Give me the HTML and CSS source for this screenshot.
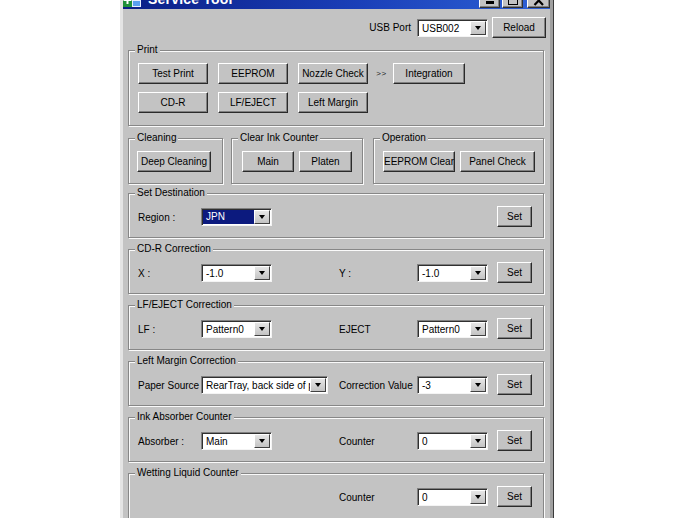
FILE: index.html
```html
<!DOCTYPE html>
<html>
<head>
<meta charset="utf-8">
<link rel="stylesheet" href="styles.css">
</head>
<body>
<div class="window">
  <div class="titlebar">
    <svg class="appicon" width="18" height="16" viewBox="0 0 18 16">
      <rect x="0" y="1" width="9" height="14" fill="#1f8f3a"/>
      <rect x="3.5" y="4" width="2" height="8" fill="#fff"/>
      <rect x="0.5" y="7" width="8" height="2" fill="#fff"/>
      <rect x="9" y="1" width="9" height="14" fill="#e8f0ff"/>
      <rect x="10" y="2" width="7" height="3" fill="#2a6ad8"/>
      <rect x="10" y="9" width="7" height="5" fill="#5aa0f0"/>
    </svg>
    <span class="title">Service Tool</span>
    <span class="spacer"></span>
    <span class="capbtn">
      <svg width="12" height="10" viewBox="0 0 12 10"><rect x="2" y="5" width="8" height="3" fill="#000"/></svg>
    </span>
    <span class="capbtn max">
      <svg width="12" height="10" viewBox="0 0 12 10"><rect x="1.5" y="0.5" width="9" height="8" fill="none" stroke="#000"/><rect x="1" y="0" width="10" height="2" fill="#000"/></svg>
    </span>
    <span class="capbtn close">
      <svg width="12" height="10" viewBox="0 0 12 10"><path d="M1.5 0 L10 9 M10 0 L1.5 9" stroke="#000" stroke-width="2.2" fill="none"/></svg>
    </span>
  </div>

  <div class="client">
    <div class="usbrow">
      <span class="usblabel">USB Port</span>
      <div class="combo"><span class="val">USB002</span><span class="arrow"><i></i></span></div>
      <button class="btn reload">Reload</button>
    </div>

    <div class="group print">
      <span class="legend">Print</span>
      <div class="btnrow">
        <button class="btn w70">Test Print</button>
        <button class="btn w70">EEPROM</button>
        <button class="btn w70">Nozzle Check</button>
        <span class="gt">&gt;&gt;</span>
        <button class="btn w72">Integration</button>
      </div>
      <div class="btnrow">
        <button class="btn w70">CD-R</button>
        <button class="btn w70">LF/EJECT</button>
        <button class="btn w70">Left Margin</button>
      </div>
    </div>

    <div class="grouprow">
      <div class="group small cleaning">
        <span class="legend">Cleaning</span>
        <button class="btn w74">Deep Cleaning</button>
      </div>
      <div class="group small clearink">
        <span class="legend">Clear Ink Counter</span>
        <button class="btn w52">Main</button>
        <button class="btn w53">Platen</button>
      </div>
      <div class="group small operation">
        <span class="legend">Operation</span>
        <button class="btn w72">EEPROM Clear</button>
        <button class="btn w75">Panel Check</button>
      </div>
    </div>

    <div class="group form first">
      <span class="legend">Set Destination</span>
      <div class="formgrid">
        <span class="lbl">Region :</span>
        <div class="combo"><span class="val sel">JPN</span><span class="arrow"><i></i></span></div>
        <button class="btn set c5">Set</button>
      </div>
    </div>

    <div class="group form">
      <span class="legend">CD-R Correction</span>
      <div class="formgrid">
        <span class="lbl">X :</span>
        <div class="combo"><span class="val">-1.0</span><span class="arrow"><i></i></span></div>
        <span class="lbl">Y :</span>
        <div class="combo"><span class="val">-1.0</span><span class="arrow"><i></i></span></div>
        <button class="btn set">Set</button>
      </div>
    </div>

    <div class="group form">
      <span class="legend">LF/EJECT Correction</span>
      <div class="formgrid">
        <span class="lbl">LF :</span>
        <div class="combo"><span class="val">Pattern0</span><span class="arrow"><i></i></span></div>
        <span class="lbl">EJECT</span>
        <div class="combo"><span class="val">Pattern0</span><span class="arrow"><i></i></span></div>
        <button class="btn set">Set</button>
      </div>
    </div>

    <div class="group form">
      <span class="legend">Left Margin Correction</span>
      <div class="formgrid">
        <span class="lbl">Paper Source</span>
        <div class="combo wide"><span class="val">RearTray, back side of paper</span><span class="arrow"><i></i></span></div>
        <span class="lbl">Correction Value</span>
        <div class="combo"><span class="val">-3</span><span class="arrow"><i></i></span></div>
        <button class="btn set">Set</button>
      </div>
    </div>

    <div class="group form">
      <span class="legend">Ink Absorber Counter</span>
      <div class="formgrid">
        <span class="lbl">Absorber :</span>
        <div class="combo"><span class="val">Main</span><span class="arrow"><i></i></span></div>
        <span class="lbl">Counter</span>
        <div class="combo"><span class="val">0</span><span class="arrow"><i></i></span></div>
        <button class="btn set">Set</button>
      </div>
    </div>

    <div class="group form last">
      <span class="legend">Wetting Liquid Counter</span>
      <div class="formgrid">
        <span class="lbl c3">Counter</span>
        <div class="combo"><span class="val">0</span><span class="arrow"><i></i></span></div>
        <button class="btn set">Set</button>
      </div>
    </div>
  </div>
</div>
</body>
</html>
```

FILE: styles.css
```css
html, body {
  margin: 0;
  padding: 0;
  height: 518px;
  overflow: hidden;
  background: #ffffff;
}

body {
  font-family: "Liberation Sans", Arial, sans-serif;
  font-size: 10px;
  color: #000;
}

.window {
  box-sizing: border-box;
  width: 433px;
  margin: -12px 0 0 120px;
  background: #c3c3c3;
  border: 3px solid #c3c3c3;
  border-left-color: #e4e4e4;
  border-top-color: #e4e4e4;
  border-right-color: #a0a0a0;
  box-shadow: 1px 0 0 #3a3a3a;
}

.titlebar {
  display: flex;
  align-items: center;
  height: 18px;
  background: linear-gradient(to right, #0b1f86, #1a3fb8 55%, #2e62d6);
}

.appicon {
  display: block;
  margin-right: 7px;
}

.title {
  color: #fff;
  font-weight: bold;
  font-size: 14px;
  letter-spacing: 0.2px;
  margin-bottom: 3px;
}

.spacer {
  flex: 1;
}

.capbtn {
  box-sizing: border-box;
  width: 21px;
  height: 16px;
  align-self: flex-end;
  margin-bottom: 1px;
  background: #c3c3c3;
  border: 1px solid;
  border-color: #fff #303030 #303030 #fff;
  box-shadow: inset -1px -1px 0 #808080;
  display: flex;
  align-items: flex-end;
  justify-content: center;
  padding-bottom: 1px;
}

.capbtn svg {
  display: block;
}

.capbtn.max {
  margin-left: 2px;
}

.capbtn.close {
  width: 23px;
  margin-left: 4px;
}

.client {
  padding: 8px 4px 0 5px;
  height: 600px;
}

.usbrow {
  display: flex;
  justify-content: flex-end;
  align-items: center;
  height: 21px;
}

.usblabel {
  margin-right: 6px;
}

.reload {
  width: 54px;
  margin-left: 4px;
}

.btn {
  box-sizing: border-box;
  height: 21px;
  padding: 0;
  background: #c3c3c3;
  border: 1px solid;
  border-color: #fff #2a2a2a #2a2a2a #fff;
  box-shadow: inset -1px -1px 0 #808080;
  font-family: "Liberation Sans", Arial, sans-serif;
  font-size: 10px;
  color: #000;
  text-align: center;
  white-space: nowrap;
  overflow: hidden;
  flex: none;
}

.w52 { width: 52px; }
.w53 { width: 53px; }
.w70 { width: 70px; }
.w72 { width: 72px; }
.w74 { width: 74px; }
.w75 { width: 75px; }

.group {
  position: relative;
  box-sizing: border-box;
  width: 416px;
  border: 1px solid #878787;
  box-shadow: inset 1px 1px 0 #fafafa, 1px 1px 0 #fafafa;
}

.legend {
  position: absolute;
  top: -7px;
  left: 6px;
  padding: 0 2px;
  line-height: 12px;
  background: #c3c3c3;
  white-space: nowrap;
}

.print {
  height: 76px;
  margin-top: 12px;
  padding: 12px 0 0 9px;
}

.btnrow {
  display: flex;
  align-items: center;
  gap: 10px;
}

.btnrow + .btnrow {
  margin-top: 8px;
}

.gt {
  box-sizing: border-box;
  width: 25px;
  margin: 0 -10px;
  padding-left: 2px;
  text-align: center;
  font-size: 8px;
  letter-spacing: 0.5px;
  color: #222;
}

.grouprow {
  display: flex;
  margin-top: 12px;
}

.group.small {
  height: 46px;
  padding-top: 12px;
  display: flex;
  gap: 5px;
}

.cleaning {
  width: 95px;
  padding-left: 8px;
}

.clearink {
  width: 132px;
  margin-left: 8px;
  padding-left: 10px;
  gap: 6px;
}

.group.operation {
  width: 171px;
  margin-left: 10px;
  padding-left: 9px;
}

.group.form {
  height: 45px;
  margin-top: 11px;
  padding: 12px 0 0 9px;
}

.group.form.first {
  margin-top: 9px;
}

.group.form.last {
  height: 70px;
}

.formgrid {
  display: grid;
  grid-template-columns: 63px 138px 78px 80px 35px;
  align-items: center;
  height: 21px;
}

.lbl {
  white-space: nowrap;
  padding-top: 2px;
}

.c3 { grid-column: 3; }
.c5 { grid-column: 5; }

.set {
  width: 35px;
}

.combo {
  box-sizing: border-box;
  display: flex;
  width: 71px;
  height: 18px;
  background: #fff;
  border: 1px solid;
  border-color: #808080 #f4f4f4 #f4f4f4 #808080;
  box-shadow: inset 1px 1px 0 #303030;
}

.combo.wide {
  width: 127px;
}

.combo .val {
  flex: 1;
  min-width: 0;
  overflow: hidden;
  white-space: nowrap;
  line-height: 15px;
  padding-left: 3px;
  margin: 1px 0 0 1px;
}

.combo .val.sel {
  background: #0c1a7e;
  color: #fff;
  margin: 1px 0 1px 1px;
  line-height: 14px;
}

.combo .arrow {
  box-sizing: border-box;
  flex: none;
  width: 16px;
  margin: 1px 1px 1px 0;
  background: linear-gradient(#e6e6e6, #c3c3c3);
  border: 1px solid;
  border-color: #fff #404040 #404040 #fff;
  display: flex;
  align-items: center;
  justify-content: center;
}

.combo .arrow i {
  display: block;
  width: 0;
  height: 0;
  border-left: 3.5px solid transparent;
  border-right: 3.5px solid transparent;
  border-top: 4px solid #000;
}
```
